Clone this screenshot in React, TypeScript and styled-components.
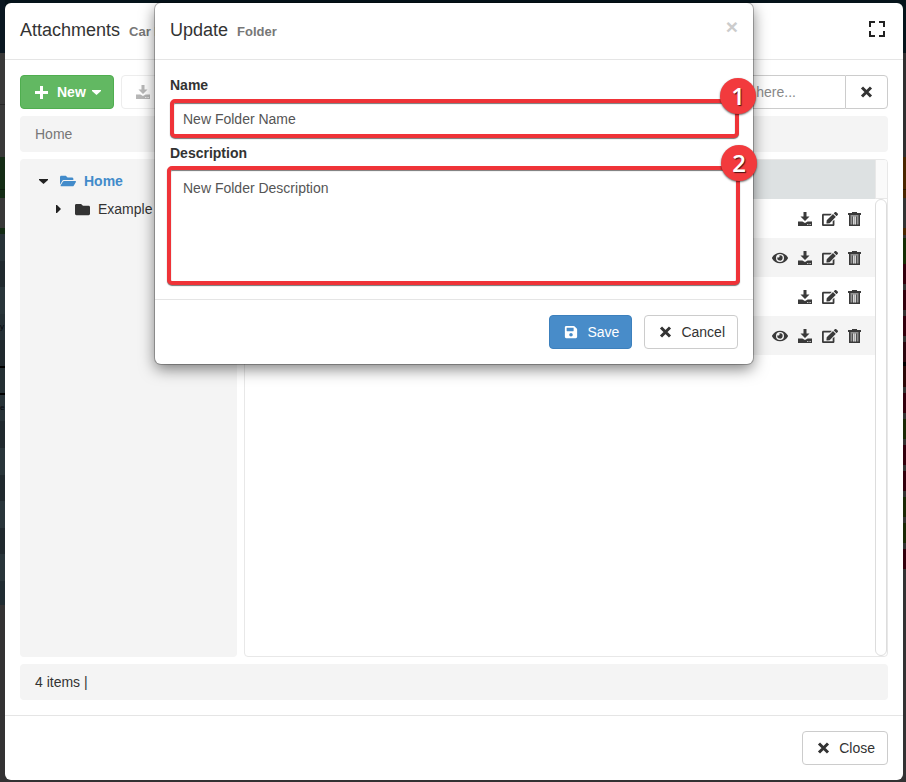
import React from "react";
import styled, { createGlobalStyle, css } from "styled-components";
import { FaEdit, FaEye, FaSave, FaFolder, FaFolderOpen } from "react-icons/fa";

const GlobalStyle = createGlobalStyle`
  *, *::before, *::after { box-sizing: border-box; }
  html, body, #root { height: 100%; }
  body {
    margin: 0;
    background: #333233;
    color: #333;
    font: 14px/20px "Liberation Sans", Arial, sans-serif;
  }
  button, input, textarea { font: inherit; color: inherit; }
  svg { display: block; flex: none; }
`;

type Band = [height: number, color: string, text?: string];

const leftBands: Band[] = [
  [53, "#0a1721"], [51, "#393939"], [1, "#272727"], [52, "#393939"],
  [32, "#142c15"], [1, "#0d1d0e"], [8, "#142c15"], [30, "#383838"], [6, "#132b14"],
  [27, "#273237"], [26, "#20292e"], [27, "#29353a"], [26, "#253035", "y"], [26, "#20292e"],
  [2, "#000"], [25, "#242f33"], [2, "#000"], [26, "#273237", "e"], [27, "#20292e"],
  [27, "#29353a"], [26, "#20292e"], [27, "#29353a"], [26, "#20292e"], [27, "#29353a"],
  [24, "#202c32"],
];

const rightBands: Band[] = [
  [53, "#05131a"], [104, "#302f30"], [32, "#4a2700"], [1, "#2a1600"], [8, "#4a2700"],
  [30, "#333"], [7, "#4a2700"], [3, "#333"], [26, "#162e05"],
  [20, "#32000d"], [6, "#333"], [20, "#32000d"], [6, "#333"], [20, "#32000d"], [6, "#333"],
  [20, "#2c0710"], [4, "#000"], [21, "#2c0808"], [6, "#333"], [20, "#32000d"], [6, "#333"],
  [20, "#1b2906"], [6, "#333"], [20, "#32000d"], [6, "#333"], [20, "#32000d"], [6, "#333"],
  [20, "#1b2906"], [6, "#333"], [20, "#1b2906"], [6, "#333"], [20, "#32000d"],
];

const Screen = styled.div`
  min-height: 100%;
  display: flex;
  padding-bottom: 2px;
  position: relative;
`;

const Edge = styled.div<{ $width: number }>`
  width: ${(p) => p.$width}px;
  flex: none;
`;

const EdgeBand = styled.div<{ $height: number; $color: string }>`
  height: ${(p) => p.$height}px;
  background: ${(p) => p.$color};
  color: #07080f;
  font-size: 8px;
  line-height: ${(p) => p.$height}px;
`;

const Center = styled.div`
  flex: 1;
  min-width: 0;
  display: flex;
  padding-top: 3px;
  background: linear-gradient(#05131a 53px, #333233 53px);
`;

const Panel = css`
  background: #fff;
  border-radius: 6px;
  display: flex;
  flex-direction: column;
`;

const Window = styled.main`
  ${Panel}
  flex: 1;
  min-width: 0;
`;

const Header = styled.header`
  display: flex;
  align-items: center;
  justify-content: space-between;
  padding: 15px;
  height: 57px;
  border-bottom: 1px solid #e5e5e5;
`;

const Title = styled.h1`
  margin: 0;
  font-size: 18px;
  font-weight: 400;
  line-height: 26px;
  display: flex;
  align-items: baseline;
  gap: 9px;
`;

const Subtitle = styled.small`
  font-size: 13px;
  font-weight: 700;
  color: #777;
`;

const Footer = styled.footer`
  display: flex;
  justify-content: flex-end;
  gap: 12px;
  padding: 15px;
  border-top: 1px solid #e5e5e5;
`;

const IconButton = styled.button`
  display: flex;
  padding: 0;
  border: 0;
  background: none;
  color: #3a3a3a;
  cursor: pointer;
`;

const FullScreen = styled(IconButton)`
  align-self: flex-start;
  padding: 3px;
`;

const Dismiss = styled(IconButton)`
  align-self: flex-start;
  color: #ccc;
  font-size: 21px;
  font-weight: 700;
  line-height: 18px;
`;

const tones = {
  plain: css`background: #fff; border-color: #ccc; color: #333;`,
  green: css`background: #62b862; border-color: #4fae4f; color: #fff;`,
  blue: css`background: #488cc9; border-color: #3c80bd; color: #fff;`,
};

const Button = styled.button<{ $tone?: keyof typeof tones }>`
  display: flex;
  align-items: center;
  gap: 9px;
  height: 34px;
  padding: 0 12px 0 14px;
  border: 1px solid;
  border-radius: 4px;
  cursor: pointer;
  ${(p) => tones[p.$tone ?? "plain"]}
  &:disabled { opacity: 0.35; }
`;

const MenuLabel = styled.span`
  display: flex;
  align-items: center;
  gap: 6px;
  font-weight: 700;
`;

const Body = styled.div`
  flex: 1;
  display: flex;
  flex-direction: column;
  gap: 7px;
  padding: 15px;
`;

const Toolbar = styled.div`
  display: flex;
  gap: 7px;
`;

const Search = styled.div`
  display: flex;
  width: 193px;
  margin-left: auto;
`;

const SearchInput = styled.input`
  flex: 1;
  min-width: 0;
  height: 34px;
  padding: 0 12px;
  border: 1px solid #ccc;
  border-right: 0;
  border-radius: 4px 0 0 4px;
  &::placeholder { color: #888; opacity: 1; }
`;

const SearchClear = styled(Button)`
  width: 43px;
  padding: 0;
  justify-content: center;
  border-radius: 0 4px 4px 0;
`;

const Strip = styled.div<{ $muted?: boolean }>`
  height: 36px;
  padding: 8px 15px;
  border-radius: 4px;
  background: #f4f4f4;
  color: ${(p) => (p.$muted ? "#777" : "#333")};
`;

const Columns = styled.div`
  flex: 1;
  display: grid;
  grid-template-columns: 25% 1fr;
  gap: 7px;
`;

const Tree = styled.nav`
  padding: 8px 15px;
  border-radius: 4px;
  background: #f4f4f4;
`;

const TreeRow = styled.a<{ $depth: number; $active?: boolean }>`
  display: flex;
  align-items: center;
  gap: 8px;
  height: 28px;
  padding-left: ${(p) => p.$depth * 15}px;
  color: ${(p) => (p.$active ? "#428bca" : "#333")};
  font-weight: ${(p) => (p.$active ? 700 : 400)};
  text-decoration: none;
`;

const Toggle = styled.span`
  display: flex;
  justify-content: center;
  width: 17px;
  color: #222;
`;

const Listing = styled.section`
  display: flex;
  border: 1px solid #e8e8e8;
  border-radius: 4px;
  overflow: hidden;
`;

const FileTable = styled.table`
  flex: 1;
  align-self: flex-start;
  border-collapse: collapse;
`;

const HeadCell = styled.th`
  height: 39px;
  padding: 0;
  background: #dde1e2;
`;

const FileRow = styled.tr`
  height: 39px;
  &:nth-child(even) { background: #f4f4f4; }
`;

const FileCell = styled.td`
  padding: 0 14px;
`;

const Actions = styled.div`
  display: flex;
  justify-content: flex-end;
  align-items: center;
  gap: 10px;
`;

const Scroller = styled.div`
  display: flex;
  flex-direction: column;
  width: 12px;
`;

const ScrollerHead = styled.div`
  height: 39px;
  background: #fafafa;
  border-left: 1px solid #e8e8e8;
  border-bottom: 1px solid #e8e8e8;
`;

const Thumb = styled.div`
  flex: 1;
  border: 1px solid #ddd;
  border-radius: 6px;
`;

const Overlay = styled.div`
  position: absolute;
  inset: 3px 3px 0 5px;
  display: flex;
  justify-content: center;
  align-items: flex-start;
`;

const Dialog = styled.section`
  ${Panel}
  width: 100%;
  max-width: 598px;
  box-shadow: 0 0 0 1px rgba(0, 0, 0, 0.25), 0 5px 15px rgba(0, 0, 0, 0.5);
`;

const Form = styled.form`
  display: flex;
  flex-direction: column;
  gap: 5px;
  padding: 15px 15px 14px;
`;

const Field = styled.div<{ $gap: number }>`
  display: flex;
  flex-direction: column;
  gap: ${(p) => p.$gap}px;
`;

const Label = styled.label`
  font-weight: 700;
`;

const outline = css`
  width: 100%;
  border: 4px solid #ef3338;
  border-radius: 5px;
  background: #fff;
  color: #555;
  outline: 0;
  box-shadow: 0 1px 1px #777, inset 0 1px 1px #777;
`;

const NameInput = styled.input`
  ${outline}
  display: block;
  height: 39px;
  padding: 0 9px;
`;

const DescriptionInput = styled.textarea`
  ${outline}
  display: block;
  height: 119px;
  padding: 8px 12px;
  resize: none;
`;

const Marked = styled.div<{ $wide?: boolean }>`
  position: relative;
  margin: ${(p) => (p.$wide ? "0 -2px 0 -3px" : "0 -1px 0 0")};
`;

const Badge = styled.span`
  position: absolute;
  top: -21px;
  right: -17px;
  width: 36px;
  height: 36px;
  border-radius: 50%;
  background: #f23a3d;
  color: #fff;
  font: 600 24px/36px "Open Sans", sans-serif;
  text-align: center;
  text-shadow: 1px 1px 1px rgba(0, 0, 0, 0.7);
  box-shadow: 0 1px 2px rgba(0, 0, 0, 0.6);
`;

const Cross = () => (
  <svg width="13" height="12" viewBox="0 0 13 12" fill="none" stroke="currentColor" strokeWidth="3">
    <path d="M2 1.5l9 9M11 1.5l-9 9" />
  </svg>
);

const Plus = () => (
  <svg width="13" height="13" viewBox="0 0 13 13" fill="currentColor">
    <path d="M5 0h3v5h5v3H8v5H5V8H0V5h5z" />
  </svg>
);

const Download = () => (
  <svg width="14" height="14" viewBox="0 0 14 14" fill="currentColor">
    <path d="M5.5 0h3v4.500h3L7 9 2.500 4.500h3z" />
    <path fillRule="evenodd" d="M0 9.500h4.300L7 11l2.700-1.500H14V14H0zM9.300 12v1h1v-1zM11.600 12v1h1v-1z" />
  </svg>
);

const Trash = () => (
  <svg width="13" height="14" viewBox="0 0 13 14" fill="currentColor">
    <path d="M4 0h5v1h4v2H0V1h4z" />
    <path opacity="0.55" d="M2 3h9v10H2z" />
    <path d="M1 3h1.500v9.500h8V3H12v11H1zM4.300 4.500h1v8h-1zM7.700 4.500h1v8h-1z" />
    <path fill="#fff" d="M5.300 4.500h.8v8h-.8zM6.900 4.500h.8v8h-.8z" />
  </svg>
);

const Caret = ({ side = false }: { side?: boolean }) =>
  side ? (
    <svg width="5" height="8" viewBox="0 0 5 8" fill="currentColor"><path d="M0 0h1l4 4-4 4H0z" /></svg>
  ) : (
    <svg width="9" height="5" viewBox="0 0 9 5" fill="currentColor"><path d="M0 0h9v1L4.500 5 0 1z" /></svg>
  );

const Expand = () => (
  <svg width="16" height="16" viewBox="0 0 16 16" fill="none" stroke="#222" strokeWidth="2">
    <path d="M1 6V1h5M10 1h5v5M15 10v5h-5M6 15H1v-5" />
  </svg>
);

const files = [
  { id: 1, preview: false },
  { id: 2, preview: true },
  { id: 3, preview: false },
  { id: 4, preview: true },
];

function EdgeColumn({ bands, width }: { bands: Band[]; width: number }) {
  return (
    <Edge $width={width} aria-hidden="true">
      {bands.map(([height, color, text], i) => (
        <EdgeBand key={i} $height={height} $color={color}>{text}</EdgeBand>
      ))}
    </Edge>
  );
}

export default function App() {
  return (
    <>
      <GlobalStyle />
      <Screen>
        <EdgeColumn bands={leftBands} width={5} />
        <Center>
          <Window>
            <Header>
              <Title>Attachments <Subtitle>Car I</Subtitle></Title>
              <FullScreen aria-label="Full screen"><Expand /></FullScreen>
            </Header>
            <Body>
              <Toolbar>
                <Button $tone="green"><Plus /><MenuLabel>New<Caret /></MenuLabel></Button>
                <Button disabled aria-label="Download"><Download /></Button>
                <Search>
                  <SearchInput aria-label="Search" placeholder="Search here..." />
                  <SearchClear aria-label="Clear search"><Cross /></SearchClear>
                </Search>
              </Toolbar>
              <Strip $muted>Home</Strip>
              <Columns>
                <Tree aria-label="Folders">
                  <TreeRow href="#home" $depth={0} $active>
                    <Toggle><Caret /></Toggle><FaFolderOpen size={16} />Home
                  </TreeRow>
                  <TreeRow href="#example" $depth={1}>
                    <Toggle><Caret side /></Toggle><FaFolder size={15} />Example
                  </TreeRow>
                </Tree>
                <Listing>
                  <FileTable>
                    <thead><tr><HeadCell aria-label="Actions" /></tr></thead>
                    <tbody>
                      {files.map((file) => (
                        <FileRow key={file.id}>
                          <FileCell>
                            <Actions>
                              {file.preview && <IconButton aria-label="Preview"><FaEye size={16} /></IconButton>}
                              <IconButton aria-label="Download"><Download /></IconButton>
                              <IconButton aria-label="Edit"><FaEdit size={16} /></IconButton>
                              <IconButton aria-label="Delete"><Trash /></IconButton>
                            </Actions>
                          </FileCell>
                        </FileRow>
                      ))}
                    </tbody>
                  </FileTable>
                  <Scroller><ScrollerHead /><Thumb /></Scroller>
                </Listing>
              </Columns>
              <Strip>4 items |</Strip>
            </Body>
            <Footer>
              <Button><Cross />Close</Button>
            </Footer>
          </Window>
        </Center>
        <EdgeColumn bands={rightBands} width={3} />
        <Overlay>
          <Dialog role="dialog" aria-label="Update folder">
            <Header>
              <Title as="h2">Update <Subtitle>Folder</Subtitle></Title>
              <Dismiss aria-label="Dismiss">×</Dismiss>
            </Header>
            <Form id="folder-form">
              <Field $gap={4}>
                <Label htmlFor="name">Name</Label>
                <Marked>
                  <NameInput id="name" defaultValue="New Folder Name" />
                  <Badge>1</Badge>
                </Marked>
              </Field>
              <Field $gap={3}>
                <Label htmlFor="description">Description</Label>
                <Marked $wide>
                  <DescriptionInput id="description" defaultValue="New Folder Description" />
                  <Badge>2</Badge>
                </Marked>
              </Field>
            </Form>
            <Footer>
              <Button $tone="blue" type="submit" form="folder-form"><FaSave size={14} />Save</Button>
              <Button><Cross />Cancel</Button>
            </Footer>
          </Dialog>
        </Overlay>
      </Screen>
    </>
  );
}
